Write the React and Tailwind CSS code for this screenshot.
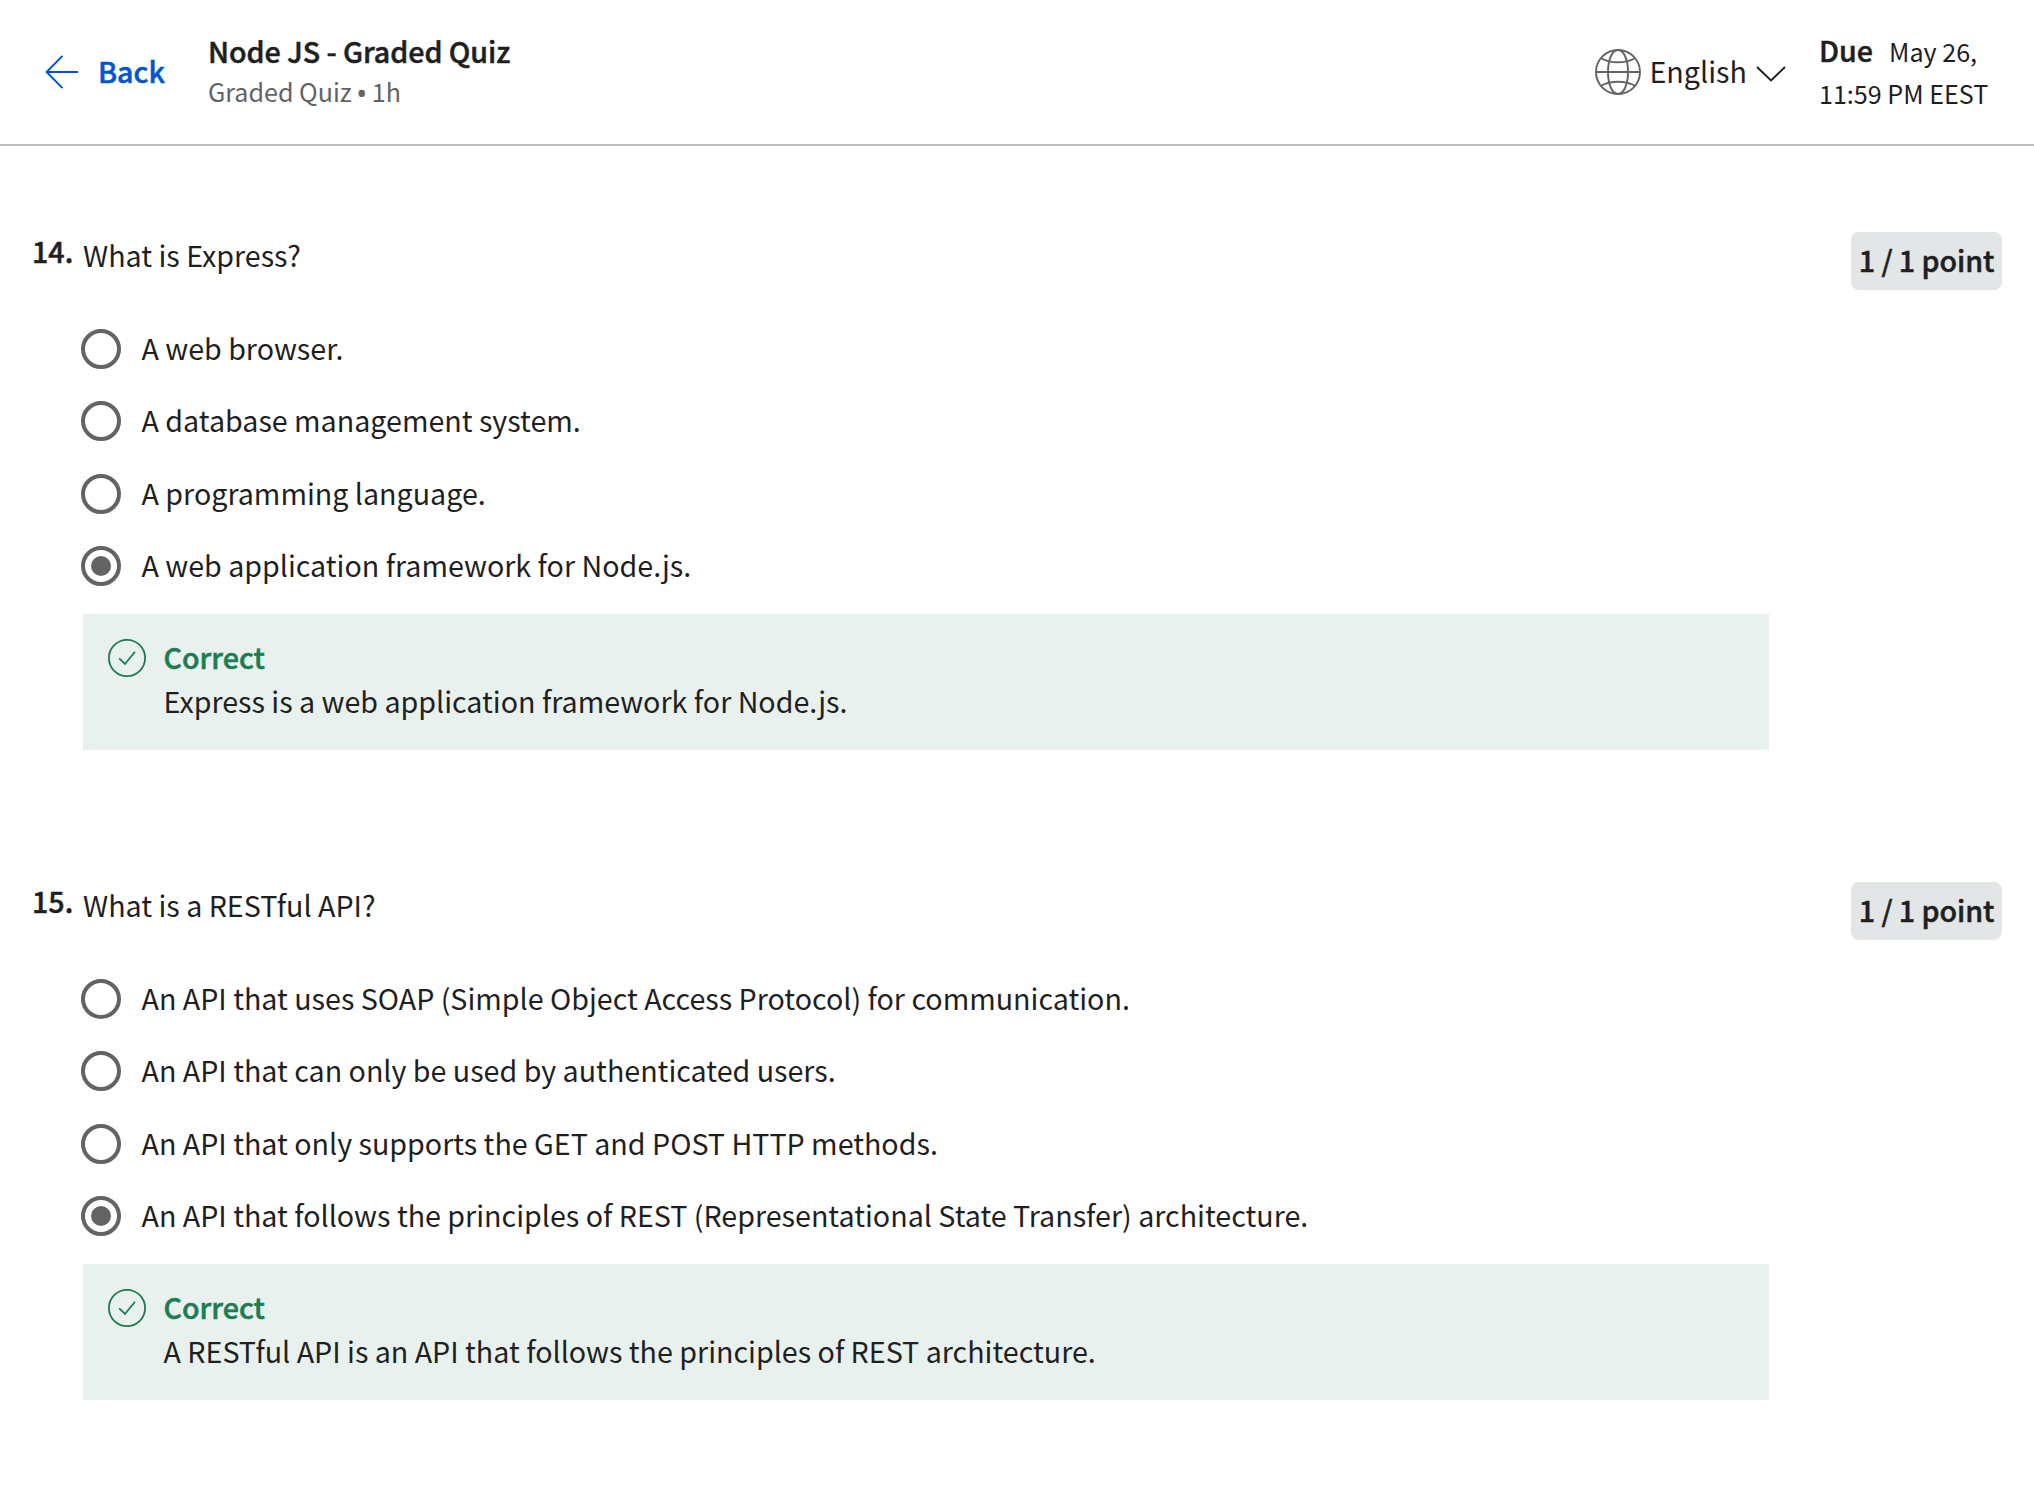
const QUESTIONS = [
  {
    number: "14.",
    title: "What is Express?",
    options: ["A web browser.", "A database management system.", "A programming language.", "A web application framework for Node.js."],
    selected: 3,
    explanation: "Express is a web application framework for Node.js.",
  },
  {
    number: "15.",
    title: "What is a RESTful API?",
    options: [
      "An API that uses SOAP (Simple Object Access Protocol) for communication.",
      "An API that can only be used by authenticated users.",
      "An API that only supports the GET and POST HTTP methods.",
      "An API that follows the principles of REST (Representational State Transfer) architecture.",
    ],
    selected: 3,
    explanation: "A RESTful API is an API that follows the principles of REST architecture.",
  },
];

// Semibold look: the medium cut, thickened slightly.
const STRONG = "font-medium [-webkit-text-stroke:0.5px_currentColor]";

function Header() {
  return (
    <header className="flex h-[146px] items-start border-b-2 border-[#bdbdbd]">
      <a className="mt-[50px] ml-[45px] flex h-[44px] w-[163px] items-center text-[#0056d2]">
        <svg className="h-[34px] w-[33px] shrink-0" viewBox="0 0 33 34" fill="none" stroke="currentColor" strokeWidth="2">
          <path d="M33 17H1.8M17.500 .9L1.600 17L17.500 33.1" />
        </svg>
        <span className={`-mt-[2px] ml-[20px] ${STRONG}`}>Back</span>
      </a>
      <div className="mt-[31px]">
        <h1 className={`leading-[40px] tracking-[-0.06px] ${STRONG}`}>Node JS - Graded Quiz</h1>
        <p className="flex text-[25.1px] leading-[40px] text-[#636363]">
          <span>Graded Quiz</span>
          <span className="mt-[2px] w-[20px] text-center font-['Noto_Sans'] text-[29px]">•</span>
          <span>1h</span>
        </p>
      </div>
      <div className="mt-[49px] ml-auto flex items-center">
        <svg className="h-[46px] w-[46px]" viewBox="0 0 46 46" fill="none" stroke="#636363" strokeWidth="1.9">
          <circle cx="23" cy="23" r="22" />
          <path d="M1 23H45M23 1C17 1 13 11 13 23S17 45 23 45S33 35 33 23S29 1 23 1M6.500 9.500C11 12 17 13.300 23 13.300S35 12 39.500 9.500M6.500 36.500C11 34 17 32.700 23 32.700S35 34 39.500 36.500" />
        </svg>
        <span className="-mt-[2px] ml-[8.5px] w-[106.5px]">English</span>
        <svg className="mt-[3px] h-[16px] w-[30px]" viewBox="0 0 30 16" fill="none" stroke="#1f1f1f" strokeWidth="1.9">
          <path d="M1 1L15 14.500L29 1" />
        </svg>
      </div>
      <div className="mt-[30px] mr-[33px] ml-[33px] w-[182px]">
        <div className="flex items-baseline leading-[40px]">
          <span className={STRONG}>Due</span>
          <span className="ml-[16px] text-[25.1px]">May 26,</span>
        </div>
        <div className="mt-[2px] text-[25.1px] leading-[40px]">11:59 PM EEST</div>
      </div>
    </header>
  );
}

function Radio({ checked }) {
  return (
    <span className="flex h-[40px] w-[40px] shrink-0 items-center justify-center rounded-full border-4 border-[#636363]">
      {checked && <span className="h-[20px] w-[20px] rounded-full bg-[#636363]" />}
    </span>
  );
}

function Question({ q }) {
  return (
    <section className="flex h-[650px] items-start px-[32px]">
      <div className={`mt-[-1px] w-[51px] ${STRONG}`}>{q.number}</div>
      <div className="w-[1686px]">
        <div className="mt-[3px] leading-[40px]">{q.title}</div>
        <div className="-ml-[2px] mt-[38px]">
          {q.options.map((o, i) => (
            <div key={o} className="flex h-[72.3px] items-center">
              <Radio checked={i === q.selected} />
              <span className="-mt-[2px] ml-[20.5px]">{o}</span>
            </div>
          ))}
        </div>
        <div className="mt-[11.8px] flex h-[136px] items-start bg-[#e8f1ee] pl-[24px]">
          <svg className="mt-[24px] h-[40px] w-[40px]" viewBox="0 0 40 40" fill="none" stroke="#1d7c50" strokeWidth="1.8">
            <circle cx="20" cy="20" r="18.100" />
            <path d="M12.200 20.300L18 26L28 13.800" />
          </svg>
          <div className="mt-[21px] ml-[16.5px]">
            <div className={`leading-[44px] text-[#1d7c50] ${STRONG}`}>Correct</div>
            <div className="leading-[44px]">{q.explanation}</div>
          </div>
        </div>
      </div>
      <div className={`ml-auto flex h-[58px] w-[151px] items-center justify-center rounded-[8px] bg-[#e3e6e7] tracking-[-0.08px] whitespace-nowrap ${STRONG}`}>
        <span className="-mt-[2px]">1 / 1 point</span>
      </div>
    </section>
  );
}

export default function App() {
  return (
    <div className="h-[1512px] w-[2034px] overflow-hidden bg-white font-['Noto_Sans_CJK_SC',sans-serif] text-[28.65px] leading-[40px] text-[#1f1f1f]">
      <Header />
      <main className="pt-[86px]">
        {QUESTIONS.map((q) => (
          <Question key={q.number} q={q} />
        ))}
      </main>
    </div>
  );
}
